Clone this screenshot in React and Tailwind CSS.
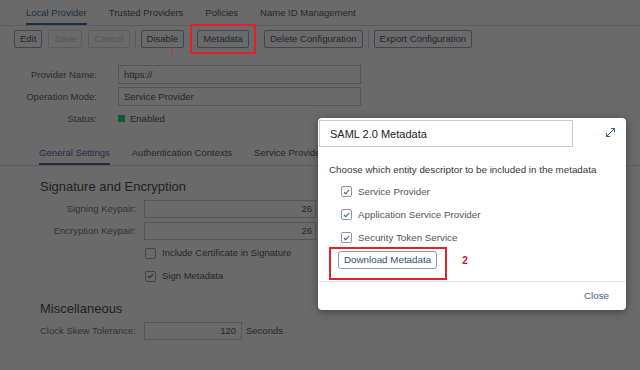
import React from "react";

const Btn = ({ children, disabled }) => (
    <div
        className={
            "h-[18px] px-[5px] flex items-center border rounded-[2px] text-[9.5px] leading-none " +
            (disabled ? "border-[#5d5d5d] text-[#555] px-[4px]" : "border-[#3f4652] text-[#1f2630]")
        }
    >
        {children}
    </div>
);

const Check = ({ on, light }) => (
    <div
        className={
            "w-[11px] h-[11px] rounded-[2px] border flex items-center justify-center " +
            (light ? "border-[#8a96a3] bg-white" : "border-[#454545]")
        }
    >
        {on && (
            <svg width="7" height="6" viewBox="0 0 7 6">
                <path d="M1 3 L2.8 4.8 L6 1" fill="none" stroke={light ? "#2f5a92" : "#2a2a2a"} strokeWidth="1.1" />
            </svg>
        )}
    </div>
);

export default function App() {
    return (
        <div className="relative w-[640px] h-[370px] overflow-hidden bg-[#6a6a6a] text-[#262626] text-[9.5px] leading-[12px] font-['Liberation_Sans',Arial,sans-serif]">
            {/* top tabs */}
            <div className="h-[26px] flex items-end gap-[22px] pl-[26px] border-b border-[#5c5c5c]">
                <div className="pb-[4px] border-b-2 border-[#1f2d44] text-[#1f2d44]">Local Provider</div>
                <div className="pb-[6px]">Trusted Providers</div>
                <div className="pb-[6px]">Policies</div>
                <div className="pb-[6px]">Name ID Management</div>
            </div>

            {/* toolbar */}
            <div className="flex items-center pl-[14px] mt-[4px] h-[18px]">
                <div className="flex gap-[6px]">
                    <Btn>Edit</Btn>
                    <Btn disabled>Save</Btn>
                    <Btn disabled>Cancel</Btn>
                </div>
                <div className="w-px h-[18px] bg-[#5a5a5a] mx-[5px]" />
                <Btn>Disable</Btn>
                <div className="relative ml-[6px] py-[4px] px-[5px] border-2 border-[#e3202a] -my-[6px]">
                    <Btn>Metadata</Btn>
                    <span className="absolute left-[-22px] top-[21px] text-[8px] text-[#e3202a]">1</span>
                </div>
                <div className="ml-[8px]">
                    <Btn>Delete Configuration</Btn>
                </div>
                <div className="w-px h-[18px] bg-[#5a5a5a] mx-[5px]" />
                <Btn>Export Configuration</Btn>
            </div>

            {/* provider form */}
            <div className="mt-[17px] flex flex-col gap-[3px]">
                <div className="flex items-center gap-[21px]">
                    <div className="w-[97px] text-right text-[#2a2a2a]">Provider Name:</div>
                    <div className="w-[243px] h-[19px] border border-[#555] px-[5px] flex items-center">https://</div>
                </div>
                <div className="flex items-center gap-[21px]">
                    <div className="w-[97px] text-right text-[#2a2a2a]">Operation Mode:</div>
                    <div className="w-[243px] h-[19px] border border-[#555] px-[5px] flex items-center">Service Provider</div>
                </div>
                <div className="flex items-center gap-[21px] h-[19px]">
                    <div className="w-[97px] text-right text-[#2a2a2a]">Status:</div>
                    <div className="flex items-center gap-[5px]">
                        <div className="w-[7px] h-[7px] bg-[#0f5a2e]" />
                        <span>Enabled</span>
                    </div>
                </div>
            </div>

            {/* inner tabs */}
            <div className="mt-[14px] h-[24px] flex items-end gap-[22px] pl-[39px] border-b border-[#5c5c5c]">
                <div className="pb-[4px] border-b-2 border-[#1f2d44] text-[#1f2d44]">General Settings</div>
                <div className="pb-[6px]">Authentication Contexts</div>
                <div className="pb-[6px]">Service Provider</div>
            </div>

            {/* signature */}
            <div className="pl-[40px]">
                <div className="mt-[12px] text-[13px] leading-[18px] text-[#1f1f1f]">Signature and Encryption</div>
                <div className="mt-[4px] flex flex-col gap-[4px]">
                    <div className="flex items-center gap-[8px]">
                        <div className="w-[96px] text-right text-[#333]">Signing Keypair:</div>
                        <div className="w-[172px] h-[18px] border border-[#555] pr-[3px] flex items-center justify-end">26</div>
                    </div>
                    <div className="flex items-center gap-[8px]">
                        <div className="w-[96px] text-right text-[#333]">Encryption Keypair:</div>
                        <div className="w-[172px] h-[18px] border border-[#555] pr-[3px] flex items-center justify-end">26</div>
                    </div>
                </div>
                <div className="ml-[105px] mt-[7px] flex flex-col gap-[11px]">
                    <div className="flex items-center gap-[6px]">
                        <Check />
                        <span>Include Certificate in Signature</span>
                    </div>
                    <div className="flex items-center gap-[6px]">
                        <Check on />
                        <span>Sign Metadata</span>
                    </div>
                </div>

                <div className="mt-[18px] text-[13px] leading-[18px] text-[#1f1f1f]">Miscellaneous</div>
                <div className="mt-[4px] flex items-center">
                    <div className="w-[104px] text-[#333]">Clock Skew Tolerance:</div>
                    <div className="w-[98px] h-[18px] border border-[#555] px-[5px] flex items-center justify-end">120</div>
                    <span className="ml-[4px]">Seconds</span>
                </div>
            </div>

            {/* dialog */}
            <div className="absolute left-[318px] top-[118px] w-[308px] h-[192px] bg-white rounded-[4px] shadow-[0_2px_8px_rgba(0,0,0,0.35)] flex flex-col text-[#32363a]">
                <div className="flex items-start">
                    <div className="mt-[2px] ml-[1px] w-[254px] h-[27px] border border-[#c9c9c9] flex items-center pl-[10px] text-[11px] text-[#222]">
                        SAML 2.0 Metadata
                    </div>
                    <div className="ml-[32px] mt-[9px]">
                        <svg width="11" height="11" viewBox="0 0 11 11" fill="none" stroke="#2f5a92" strokeWidth="1">
                            <path d="M1.5 9.5 L9.5 1.5" />
                            <path d="M6 1.5 H9.5 V5" />
                            <path d="M1.5 6 V9.5 H5" />
                        </svg>
                    </div>
                </div>
                <div className="flex-1 pl-[11px] pt-[16px] border-b border-[#e3e3e3]">
                    <div className="text-[9.8px] leading-[13px]">Choose which entity descriptor to be included in the metadata</div>
                    <div className="ml-[12px] mt-[9px] flex flex-col gap-[10px] text-[9.8px] leading-[13px] text-[#555]">
                        <div className="flex items-center gap-[6px]">
                            <Check on light />
                            <span>Service Provider</span>
                        </div>
                        <div className="flex items-center gap-[6px]">
                            <Check on light />
                            <span>Application Service Provider</span>
                        </div>
                        <div className="flex items-center gap-[6px]">
                            <Check on light />
                            <span>Security Token Service</span>
                        </div>
                    </div>
                    <div className="flex items-start mt-[3px]">
                        <div className="pt-[2px] pb-[9px] pl-[7px] pr-[8px] border-2 border-[#e3202a]">
                            <div className="h-[18px] px-[5px] flex items-center border border-[#8a9bb0] rounded-[3px] text-[9.8px] text-[#2f4f78]">
                                Download Metadata
                            </div>
                        </div>
                        <span className="ml-[15px] mt-[8px] text-[10px] font-bold text-[#c8141e]">2</span>
                    </div>
                </div>
                <div className="h-[28px] flex items-center justify-end pr-[17px] text-[9.8px] text-[#3f6190]">Close</div>
            </div>
        </div>
    );
}
